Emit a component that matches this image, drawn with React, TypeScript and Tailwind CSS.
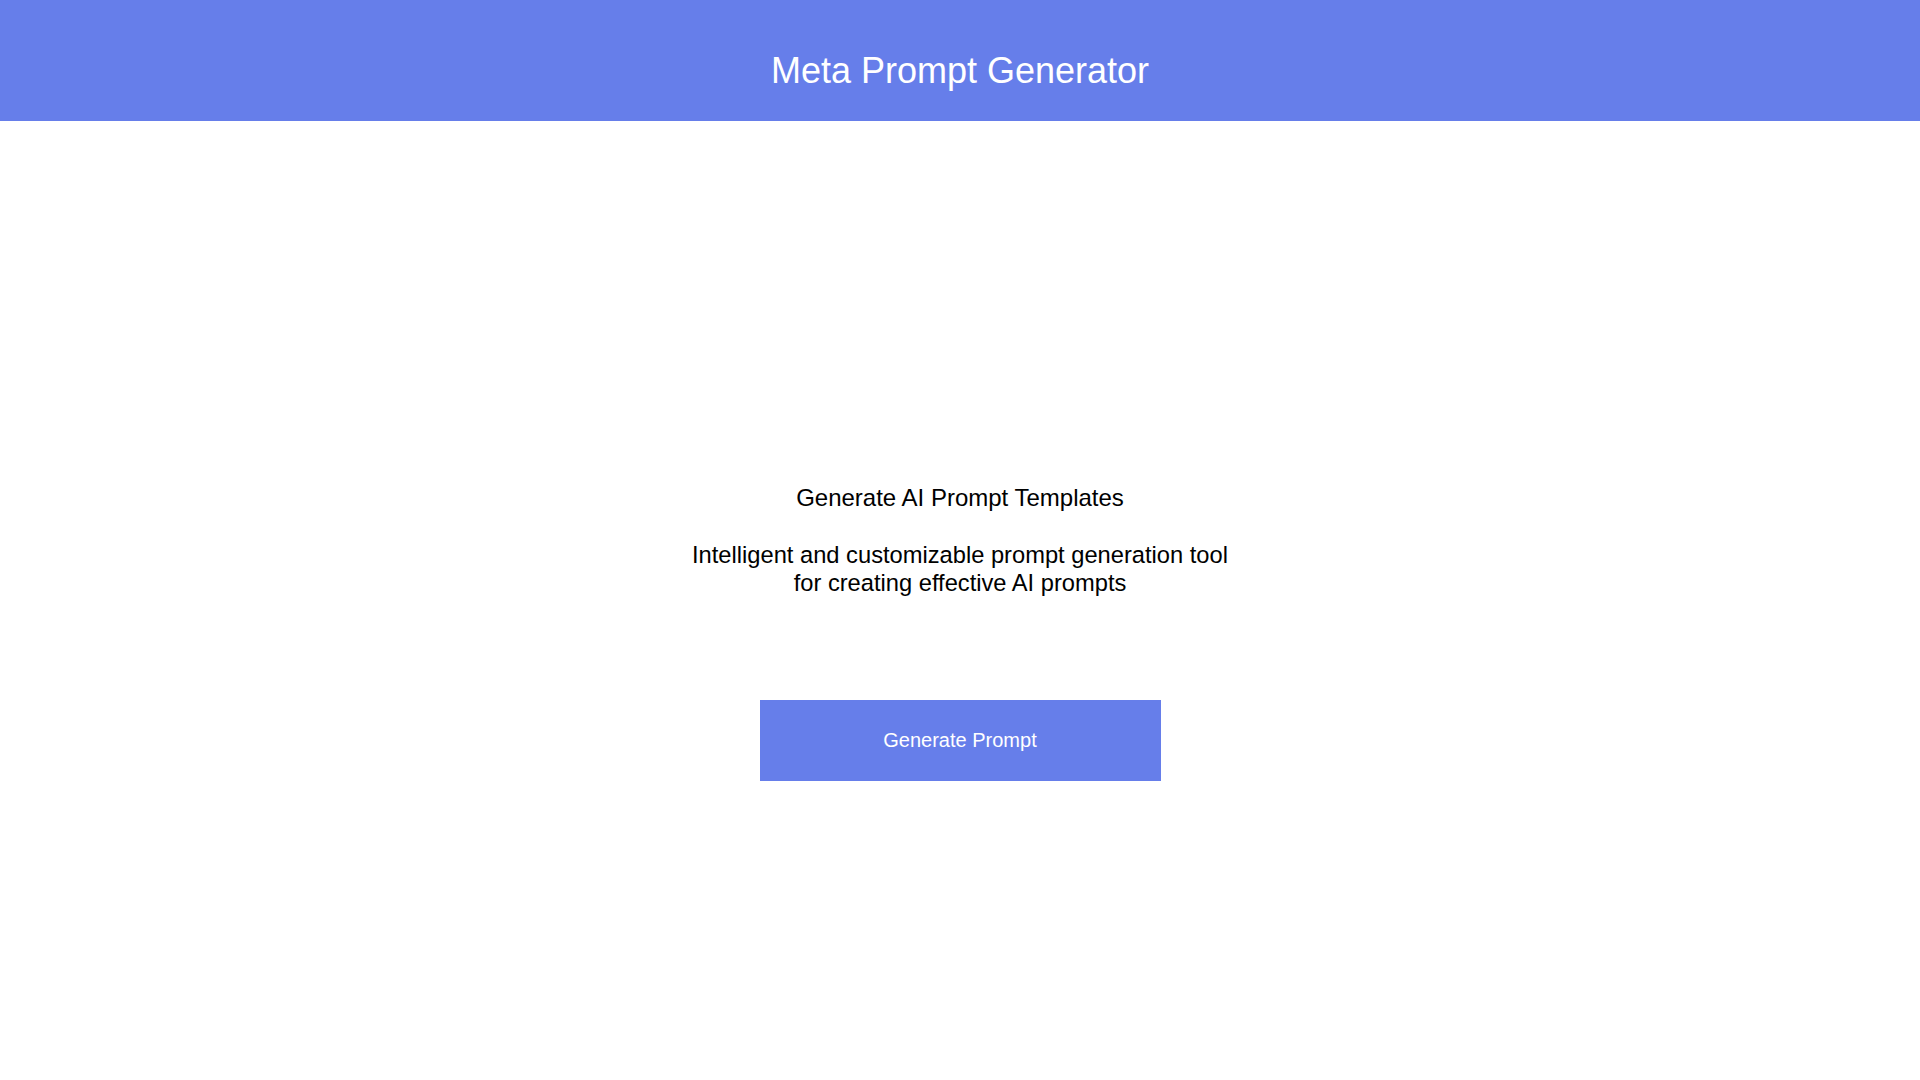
import React from "react";

const App: React.FC = () => {
  return (
    <div className="min-h-screen bg-white font-['Liberation_Sans',Arial,sans-serif]">
      {/* header */}
      <header className="h-[121px] bg-[#667eea] pt-[50px] text-center">
        <h1 className="text-[36px] leading-[41px] text-white">Meta Prompt Generator</h1>
      </header>

      <main className="flex flex-col items-center pt-[363px] text-center text-black">
        <p className="text-[24px] leading-[27.6px]">Generate AI Prompt Templates</p>
        <p className="mt-[29px] w-[560px] text-[23.7px] leading-[28px]">
          Intelligent and customizable prompt generation tool for creating effective AI prompts
        </p>
        <button className="mt-[103px] h-[81px] w-[401px] bg-[#667eea] text-[20px] text-white">
          Generate Prompt
        </button>
      </main>
    </div>
  );
};

export default App;
